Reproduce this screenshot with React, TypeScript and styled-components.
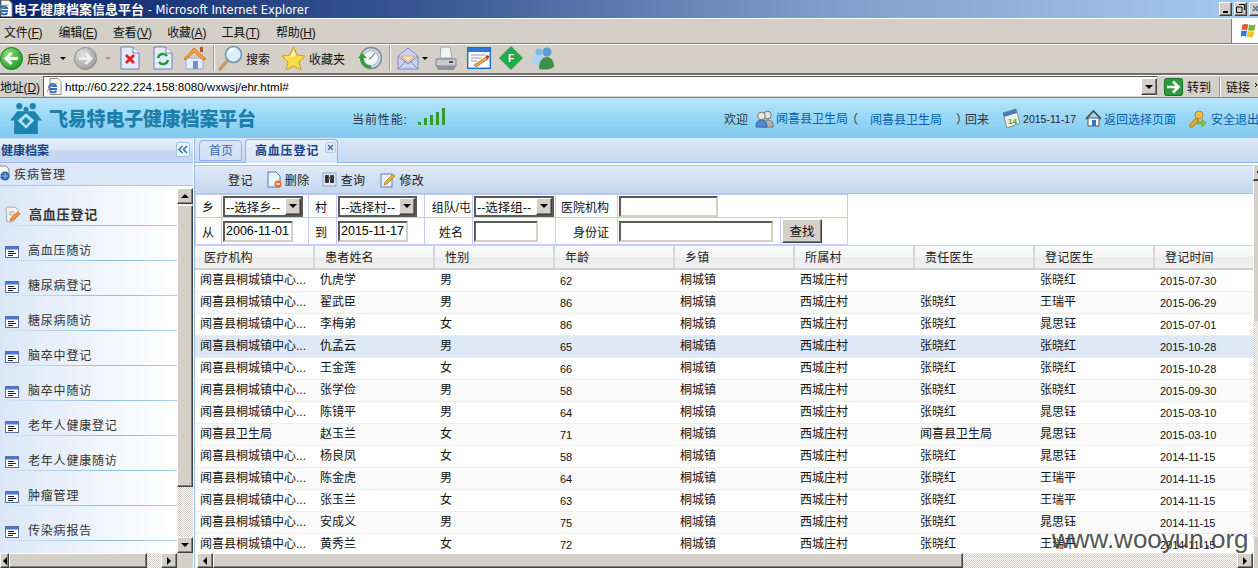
import React from "react";
import styled, { createGlobalStyle, css } from "styled-components";

const UI = `"Liberation Sans", "Noto Sans CJK SC", sans-serif`;
const face = "#d4d0c8";
const dither = `repeating-conic-gradient(#d4d0c8 0 25%, #fff 0 50%) 0 0 / 2px 2px`;
const raised = css`
  background: ${face};
  border: 1px solid;
  border-color: #fff #404040 #404040 #fff;
  box-shadow: inset -1px -1px 0 #808080;
`;
const inset = css`
  background: #fff;
  border: 2px solid;
  border-color: #5a5a5a #d4d0c8 #d4d0c8 #5a5a5a;
`;

const Global = createGlobalStyle`
  html, body { margin: 0; padding: 0; width: 1258px; height: 568px; overflow: hidden; background: #d4d0c8; }
  * { box-sizing: border-box; }
  body { font: 12px ${UI}; color: #000; }
`;

const Page = styled.div`
  position: relative;
  width: 1258px;
  height: 568px;
  overflow: hidden;
  display: flex;
  flex-direction: column;
`;

/* ---------- browser chrome ---------- */
const TitleBar = styled.div`
  height: 18px;
  flex: none;
  display: flex;
  align-items: center;
  padding: 0 0 1px 0;
  background: linear-gradient(90deg, #0a246a 0%, #3a5a96 35%, #7f9dca 65%, #a6caf0 100%);
  color: #fff;
  font-weight: bold;
`;
const TitleIcon = styled.span`
  display: flex;
  flex: none;
  margin-left: -3px;
`;
const TitleText = styled.span`
  margin-left: 1px;
  font-size: 13px;
  white-space: nowrap;
  font-family: "Liberation Sans", "Noto Sans CJK SC", sans-serif;
  & > small { font-size: 11.5px; font-family: "DejaVu Sans", sans-serif; font-weight: normal; }
`;
const WinButtons = styled.div`
  margin-left: auto;
  display: flex;
  gap: 2px;
  margin-right: -4px;
`;
const WinButton = styled.div`
  ${raised};
  width: 13px;
  height: 14px;
  display: flex;
  align-items: center;
  justify-content: center;
`;
const MenuBar = styled.div`
  height: 26px;
  flex: none;
  display: flex;
  align-items: center;
  border-top: 1px solid #fff;
  border-bottom: 1px solid #808080;
  box-shadow: inset 0 1px 0 #d4d0c8;
`;
const MenuItem = styled.span`
  width: 54.4px;
  flex: none;
  padding-left: 4px;
  color: #111;
  white-space: nowrap;
  letter-spacing: -0.2px;
`;
const FlagBox = styled.div`
  margin-left: auto;
  width: 27px;
  height: 24px;
  background: #fff;
  border-left: 1px solid #808080;
  display: flex;
  align-items: center;
  padding-left: 9px;
  overflow: hidden;
`;
const Toolbar = styled.div`
  height: 31px;
  flex: none;
  display: flex;
  align-items: center;
  padding-bottom: 2px;
  border-top: 1px solid #fff;
  border-bottom: 2px solid #707070;
`;
const ToolIcon = styled.span<{ $at: number }>`
  flex: none;
  display: flex;
  margin-left: ${(p) => p.$at}px;
`;
const ToolLabel = styled.span<{ $at: number }>`
  flex: none;
  margin-left: ${(p) => p.$at}px;
  color: #111;
  white-space: nowrap;
`;
const Caret = styled.span<{ $at: number; $dim?: boolean }>`
  flex: none;
  margin-left: ${(p) => p.$at}px;
  width: 0;
  height: 0;
  border: 3px solid transparent;
  border-bottom: 0;
  border-top: 3px solid ${(p) => (p.$dim ? "#9a9a9a" : "#000")};
`;
const ToolSep = styled.span<{ $at: number }>`
  flex: none;
  margin-left: ${(p) => p.$at}px;
  width: 2px;
  height: 26px;
  border-left: 1px solid #999;
  border-right: 1px solid #fff;
`;
const AddressBar = styled.div`
  height: 23px;
  flex: none;
  display: flex;
  align-items: center;
  overflow: hidden;
  border-top: 1px solid #fff;
  border-bottom: 1px solid #808080;
`;
const AddressLabel = styled.span`
  width: 43px;
  flex: none;
  color: #111;
  letter-spacing: -0.2px;
`;
const AddressBox = styled.div`
  width: 1115px;
  height: 21px;
  flex: none;
  display: flex;
  align-items: center;
  background: #fff;
  border: 1px solid;
  border-color: #555 #d4d0c8 #d4d0c8 #555;
  padding-left: 2px;
  position: relative;
`;
const AddressText = styled.span`
  margin-left: 3px;
  font: 11.6px "Liberation Sans", sans-serif;
`;
const ComboArrow = styled.span`
  ${raised};
  width: 16px;
  height: 17px;
  margin-left: auto;
  display: flex;
  align-items: center;
  justify-content: center;
  flex: none;
  &::after {
    content: "";
    border: 4px solid transparent;
    border-bottom: 0;
    border-top: 4px solid #000;
  }
`;
const GoLabel = styled.span`
  margin-left: 4px;
  color: #111;
  flex: none;
  white-space: nowrap;
`;
const AddrSep = styled.span`
  width: 2px;
  height: 20px;
  margin-left: 8px;
  flex: none;
  border-left: 1px solid #999;
  border-right: 1px solid #fff;
`;
const LinksLabel = styled.span`
  margin-left: 5px;
  flex: none;
  color: #111;
  white-space: nowrap;
`;
const LinksMore = styled.span`
  display: flex;
  flex: none;
  margin-left: 5px;
`;

/* ---------- site header ---------- */
const SiteHeader = styled.header`
  height: 40px;
  flex: none;
  display: flex;
  align-items: center;
  overflow: hidden;
  background: linear-gradient(180deg, #b9e6fb 0%, #9ad8f7 45%, #7fcaf0 100%);
  white-space: nowrap;
  color: #333;
  padding-top: 1px;
`;
const LogoText = styled.span`
  margin-left: 6px;
  font-size: 19px;
  line-height: 22px;
  font-weight: 900;
  color: #1d7fab;
  letter-spacing: -0.2px;
  width: 208px;
  flex: none;
  margin-top: -1px;
  font-family: "Noto Sans CJK SC", sans-serif;
`;
const PerfLabel = styled.span`
  margin-left: 95px;
  width: 66px;
  flex: none;
  color: #333;
  letter-spacing: 0.9px;
  margin-top: -1px;
`;
const Bars = styled.span`
  display: flex;
  align-items: flex-end;
  gap: 3px;
  height: 18px;
  width: 27px;
  flex: none;
  margin-top: -6px;
`;
const Bar = styled.i<{ $h: number }>`
  width: 3px;
  height: ${(p) => p.$h}px;
  background: #2f9e2f;
`;
const Muted = styled.span<{ $at: number }>`
  margin-left: ${(p) => p.$at}px;
  color: #333;
  flex: none;
`;
const LinkText = styled.span<{ $at: number; $up?: number }>`
  margin-left: ${(p) => p.$at}px;
  color: #0a5ea8;
  flex: none;
  margin-top: ${(p) => (p.$up ? -p.$up : 0)}px;
`;
const DateText = styled.span`
  margin-left: 2px;
  font-size: 10.5px;
  color: #222;
  flex: none;
`;

/* ---------- body ---------- */
const Body = styled.div`
  flex: 1;
  min-height: 0;
  display: flex;
  background: #fff;
`;
const Side = styled.aside`
  width: 195px;
  flex: none;
  display: flex;
  flex-direction: column;
  border-right: 1px solid #99bbe8;
  padding-right: 1px;
  position: relative;
  background: #fff;
`;
const SideHead = styled.div`
  height: 25px;
  flex: none;
  display: flex;
  align-items: center;
  padding: 0 3px 2px 1px;
  justify-content: space-between;
  background: linear-gradient(180deg, #e6eef9 0%, #d9e5f6 45%, #c3d6ef 55%, #c6d8f0 100%);
  border-top: 1px solid #cfe0f5;
  border-bottom: 1px solid #99bbe8;
  color: #15428b;
  font-weight: bold;
`;
const Collapse = styled.span`
  width: 14px;
  height: 15px;
  background: #eaf2fc;
  border: 1px solid #a8c4e8;
  border-radius: 2px;
  display: flex;
  align-items: center;
  justify-content: center;
`;
const SideGroup = styled.div`
  height: 23px;
  flex: none;
  display: flex;
  align-items: center;
  gap: 3px;
  padding-bottom: 2px;
  background: #dce8f8;
  border-bottom: 1px solid #a8c6e6;
  color: #333;
  letter-spacing: 1px;
  overflow: hidden;
`;
const SideMain = styled.div`
  flex: 1;
  min-height: 0;
  display: flex;
`;
const SideList = styled.div`
  flex: 1;
  min-width: 0;
  background: linear-gradient(90deg, #dbe7f7 0%, #f0f5fc 55%, #fff 100%);
  padding-top: 3px;
  overflow: hidden;
`;
const SideItem = styled.div<{ $active?: boolean }>`
  height: 35px;
  display: flex;
  align-items: flex-end;
  gap: 9px;
  padding: 0 0 2px 5px;
  color: #333;
  font-size: ${(p) => (p.$active ? 13 : 12)}px;
  font-weight: ${(p) => (p.$active ? "bold" : "normal")};
  border-bottom: 1px solid transparent;
  border-image: linear-gradient(90deg, #dbe7f7 0%, #8dbfe0 60%, #a9d2ea 100%) 1;
  letter-spacing: 0.8px;
  &:first-child { height: 37px; }
`;
const VScroll = styled.div`
  width: 16px;
  flex: none;
  display: flex;
  flex-direction: column;
  background: ${dither};
  margin-top: 2px;
`;
const SBtn = styled.div`
  ${raised};
  width: 16px;
  height: 16px;
  flex: none;
  display: flex;
  align-items: center;
  justify-content: center;
`;
const VThumb = styled.div<{ $h: number }>`
  ${raised};
  height: ${(p) => p.$h}px;
  flex: none;
  margin-top: 1px;
`;
const VSpacer = styled.div`
  flex: 1;
`;
const HScroll = styled.div`
  height: 15px;
  flex: none;
  display: flex;
  background: ${dither};
`;
const HThumb = styled.div<{ $w: number }>`
  ${raised};
  width: ${(p) => p.$w}px;
  height: 15px;
  flex: none;
`;
const ScrollCorner = styled.div`
  width: 16px;
  flex: none;
  background: ${face};
`;
const ClippedBtn = styled(SBtn)`
  width: 9px;
  height: 15px;
`;
const HBtn = styled(SBtn)`
  height: 15px;
`;

const Main = styled.main`
  flex: 1;
  min-width: 0;
  display: flex;
  flex-direction: column;
`;
const TabStrip = styled.div`
  height: 25px;
  flex: none;
  display: flex;
  align-items: flex-start;
  gap: 3px;
  padding-left: 4px;
  background: linear-gradient(180deg, #dde8f8 0%, #c6d9f1 100%);
  border-bottom: 1px solid #8db2e3;
`;
const Tab = styled.div<{ $active?: boolean }>`
  height: ${(p) => (p.$active ? 24 : 21)}px;
  width: ${(p) => (p.$active ? 93 : 43)}px;
  margin-top: ${(p) => (p.$active ? 1 : 2)}px;
  display: flex;
  align-items: center;
  padding-left: 9px;
  padding-bottom: ${(p) => (p.$active ? 4 : 2)}px;
  gap: 6px;
  border: 1px solid #8db2e3;
  border-bottom: ${(p) => (p.$active ? "0" : "1px solid #8db2e3")};
  border-radius: 4px 4px 0 0;
  background: ${(p) => (p.$active ? "linear-gradient(180deg,#e9f1fb,#dbe7f7)" : "linear-gradient(180deg,#dbe7f7,#cfdff4)")};
  color: ${(p) => (p.$active ? "#15428b" : "#416aa3")};
  font-weight: ${(p) => (p.$active ? "bold" : "normal")};
  letter-spacing: ${(p) => (p.$active ? 0.8 : 0)}px;
  position: relative;
`;
const TabClose = styled.span`
  width: 11px;
  height: 11px;
  margin-top: -4px;
  border-radius: 2px;
  background: #dfe9f7;
  border: 1px solid #b5cbe8;
  display: flex;
  align-items: center;
  justify-content: center;
`;
const MainScrollArea = styled.div`
  flex: 1;
  min-height: 0;
  display: flex;
  padding-top: 2px;
`;
const MainColumn = styled.div`
  flex: 1;
  min-width: 0;
  display: flex;
  flex-direction: column;
  overflow: hidden;
`;
const RightScroll = styled.div`
  width: 5px;
  flex: none;
  overflow: hidden;
  display: flex;
  flex-direction: column;
  background: ${dither};
`;
const RightCap = styled.div`
  height: 16px;
  flex: none;
  background: ${face};
  border-left: 1px solid #fff;
  border-bottom: 2px solid #404040;
  display: flex;
  align-items: center;
  padding-left: 3px;
  &::after { content: ""; width: 2px; height: 2px; background: #000; }
`;
const RightThumb = styled.div`
  height: 140px;
  flex: none;
  background: ${face};
  border-left: 1px solid #fff;
`;
const RightEnd = styled.div`
  height: 31px;
  flex: none;
  margin-top: auto;
  background: ${face};
  border-left: 1px solid #fff;
`;
const ActionBar = styled.div`
  height: 29px;
  flex: none;
  display: flex;
  align-items: center;
  background: linear-gradient(180deg, #dfe9f7 0%, #c4d8f0 100%);
  border-top: 1px solid #a9c8ee;
  border-bottom: 1px solid #a9c3e4;
  color: #222;
  letter-spacing: 0.4px;
`;
const ActionIcon = styled.span<{ $at: number }>`
  margin-left: ${(p) => p.$at}px;
  display: flex;
  flex: none;
`;
const ActionText = styled.span<{ $at: number }>`
  margin-left: ${(p) => p.$at}px;
  flex: none;
`;

const FormWrap = styled.div`
  height: 51px;
  flex: none;
  background: #fff;
`;
const FormTable = styled.table`
  border-collapse: collapse;
  table-layout: fixed;
  width: 652px;
  height: 51px;
  & td {
    border: 1px solid #c8c8fa;
    padding: 0 0 0 1px;
    vertical-align: middle;
    white-space: nowrap;
    color: #111;
  }
`;
const LabelCell = styled.td<{ $right?: boolean }>`
  && { text-align: ${(p) => (p.$right ? "right" : "left")}; padding: ${(p) => (p.$right ? "0 1px 0 0" : "0 0 0 6px")}; }
`;
const PaddedLabel = styled(LabelCell)<{ $pad: number }>`
  && { padding-right: ${(p) => p.$pad}px; }
`;
const Input = styled.input<{ $w: number }>`
  ${inset};
  display: block;
  width: ${(p) => p.$w}px;
  height: 21px;
  padding: 0 1px;
  font: 12.5px "Liberation Sans", sans-serif;
  color: #000;
`;
const Select = styled.div<{ $w: number }>`
  width: ${(p) => p.$w}px;
  height: 21px;
  display: flex;
  align-items: center;
  background: #fff;
  border: 2px solid #5a5a5a;
  padding-left: 1px;
  overflow: hidden;
  font-size: 12.5px;
  white-space: nowrap;
`;
const SelectText = styled.span`
  flex: 1;
  min-width: 0;
  overflow: hidden;
`;
const SelectArrow = styled.span`
  ${raised};
  width: 16px;
  height: 17px;
  flex: none;
  display: flex;
  align-items: center;
  justify-content: center;
  &::after {
    content: "";
    border: 4px solid transparent;
    border-bottom: 0;
    border-top: 4px solid #000;
  }
`;
const FindButton = styled.button`
  ${raised};
  display: block;
  width: 40px;
  height: 24px;
  padding: 0 0 2px;
  font: 12.5px ${UI};
  color: #111;
`;

const Grid = styled.div`
  flex: 1;
  min-height: 0;
  overflow: hidden;
  background: #fff;
  border-top: 1px solid #c5d5e8;
`;
const columns = css`
  display: grid;
  grid-template-columns: repeat(9, 120px);
  width: 1080px;
`;
const GridHead = styled.div`
  ${columns};
  height: 24px;
  background: linear-gradient(180deg, #fafafa 0%, #f5f5f5 50%, #ececee 52%, #f0f0f0 100%);
  border-bottom: 2px solid #d0d0d0;
`;
const HeadCell = styled.div`
  padding: 2px 0 0 10px;
  border-right: 2px solid #d8d8d8;
  color: #222;
  letter-spacing: 0.2px;
  white-space: nowrap;
  &:first-child { padding-left: 9px; }
  &:last-child { border-right: 0; }
`;
const Row = styled.div<{ $alt?: boolean; $selected?: boolean }>`
  ${columns};
  height: 22px;
  background: ${(p) => (p.$selected ? "#dfe8f6" : p.$alt ? "#fafafa" : "#fff")};
  border-bottom: 1px solid #ededed;
`;
const Cell = styled.div<{ $num?: boolean }>`
  padding: ${(p) => (p.$num ? "4px" : "3px")} 0 0 5px;
  font-size: ${(p) => (p.$num ? "11px" : "12px")};
  line-height: 15px;
  color: #111;
  white-space: nowrap;
  overflow: hidden;
`;
const BottomBar = styled.div`
  height: 15px;
  flex: none;
  display: flex;
  background: ${dither};
`;
const BottomGap = styled.div`
  width: 2px;
  flex: none;
  background: #fff;
`;
const Watermark = styled.div`
  position: absolute;
  left: 1052px;
  top: 524px;
  font: 26px "Liberation Sans", sans-serif;
  color: #444;
  opacity: 0.9;
  white-space: nowrap;
  pointer-events: none;
`;

/* ---------- icons ---------- */
const Tri = ({ d }: { d: "u" | "d" | "l" | "r" }) => {
  const p = { u: "0,7 4,3 8,7", d: "0,3 4,7 8,3", l: "6,1 2,5 6,9", r: "2,1 6,5 2,9" }[d];
  return <svg width="8" height="10"><polygon points={p} fill="#000" /></svg>;
};
const IeDoc = () => (
  <svg width="16" height="17" viewBox="0 0 16 17">
    <path d="M4 .5h8l3 3v13H4z" fill="#fff" stroke="#8a8a8a" />
    <path d="M11 11H3.500a3.500 3.500 0 0 1 6.500-3H4M10.500 13a4.500 4.500 0 0 1-6.500 0" fill="none" stroke="#2c6cd0" strokeWidth="2" />
    <path d="M.8 15c1.500-5 7-10 11-10" fill="none" stroke="#e9a020" strokeWidth="1" />
  </svg>
);
const CircleBtn = ({ on }: { on: boolean }) => (
  <svg width="23" height="23" viewBox="0 0 23 23">
    <defs>
      <radialGradient id={on ? "cg" : "cd"} cx="35%" cy="30%" r="75%">
        <stop offset="0" stopColor={on ? "#8fe07a" : "#e0e0e0"} />
        <stop offset="1" stopColor={on ? "#1f9a25" : "#9c9c9c"} />
      </radialGradient>
    </defs>
    <circle cx="11.5" cy="11.5" r="11" fill={`url(#${on ? "cg" : "cd"})`} stroke={on ? "#1d7a20" : "#8c8c8c"} />
    {on ? (
      <path d="M18 11.5H7M11.5 6l-5.5 5.5 5.5 5.5" fill="none" stroke="#fff" strokeWidth="3" />
    ) : (
      <path d="M5 11.5h11M11.5 6l5.5 5.5-5.5 5.5" fill="none" stroke="#eee" strokeWidth="3" />
    )}
  </svg>
);
const DocBase = ({ children }: { children: React.ReactNode }) => (
  <svg width="20" height="24" viewBox="0 0 20 24">
    <path d="M1 1h12l6 6v16H1z" fill="#e4ecfb" stroke="#6f7fb8" />
    <path d="M13 1v6h6" fill="#fff" stroke="#6f7fb8" />
    {children}
  </svg>
);
const HomeIcon = () => (
  <svg width="24" height="25" viewBox="0 0 24 25">
    <path d="M3 12v11h17V12z" fill="#e8eef8" stroke="#9aa8c8" />
    <rect x="10" y="15" width="5" height="8" fill="#6d8fd0" />
    <path d="M1 13 11 2l12 11-3 1-9-8-8 8z" fill="#f2a23c" stroke="#d07a20" />
    <rect x="17" y="1" width="3" height="5" fill="#c84a30" />
  </svg>
);
const SearchIcon = () => (
  <svg width="25" height="26" viewBox="0 0 25 26">
    <path d="M10 15 2 24" stroke="#c89a6a" strokeWidth="3.4" strokeLinecap="round" />
    <circle cx="15.5" cy="9.5" r="8" fill="#d8f0fb" stroke="#6f94b8" strokeWidth="1.6" />
    <path d="M11 8a5 5 0 0 1 5-4" fill="none" stroke="#fff" strokeWidth="2" />
  </svg>
);
const StarIcon = () => (
  <svg width="25" height="25" viewBox="0 0 25 25">
    <polygon points="12.5,1 16,9 24,10 18,16 20,24 12.5,20 5,24 7,16 1,10 9,9" fill="#fbdc4a" stroke="#c8a020" />
    <polygon points="12.5,4 14.5,10 9,11" fill="#fff7b8" />
  </svg>
);
const HistoryIcon = () => (
  <svg width="24" height="24" viewBox="0 0 24 24">
    <circle cx="13" cy="12" r="10.5" fill="#cfd8df" stroke="#7b8a96" strokeWidth="1.5" />
    <circle cx="13" cy="12" r="7.5" fill="#f4f7fa" stroke="#a8b4c0" />
    <path d="M13 12l4-5M13 12l-2 1" stroke="#555" />
    <path d="M4 11c-1 5 3 10 9 10" fill="none" stroke="#2f9e2f" strokeWidth="3" />
    <path d="M0 12 4 7l5 5z" fill="#2f9e2f" />
  </svg>
);
const MailIcon = () => (
  <svg width="22" height="25" viewBox="0 0 22 25">
    <path d="M1 10 11 2l10 8v13H1z" fill="#c8d2f0" stroke="#8088c8" />
    <path d="M4 10h14l-7 6z" fill="#fbe2b8" stroke="#e0b070" />
    <path d="M1 23l8-8M21 23l-8-8M1 10l10 8 10-8" fill="none" stroke="#8088c8" />
  </svg>
);
const PrintIcon = () => (
  <svg width="24" height="25" viewBox="0 0 24 25">
    <path d="M7 1h9l2 11H6z" fill="#f4f4f4" stroke="#9aa4b0" />
    <path d="M2 13h20v7H2z" fill="#c8ccd0" stroke="#7d8288" />
    <path d="M2 20h20l-2 4H4z" fill="#8e9398" />
    <rect x="15" y="15" width="4" height="2" fill="#4a4f54" />
  </svg>
);
const EditIcon = () => (
  <svg width="24" height="22" viewBox="0 0 24 22">
    <rect x=".7" y=".7" width="22.6" height="20.6" fill="#fff" stroke="#1a6cd0" strokeWidth="1.4" />
    <rect x="1" y="1" width="22" height="4" fill="#2a78d8" />
    <path d="M4 8h15M4 11h11M4 14h6" stroke="#8a9ab8" />
    <path d="M7 18 19 10l2 2-12 8z" fill="#e8b040" stroke="#805020" strokeWidth=".6" />
    <circle cx="20.5" cy="10" r="1.8" fill="#d03030" />
  </svg>
);
const DiamondF = () => (
  <svg width="24" height="24" viewBox="0 0 24 24">
    <polygon points="12,0 24,12 12,24 0,12" fill="#27a84a" />
    <text x="12" y="16" textAnchor="middle" fontSize="10" fontWeight="bold" fontFamily="Liberation Sans" fill="#fff">F</text>
  </svg>
);
const MsnIcon = () => (
  <svg width="24" height="24" viewBox="0 0 24 24">
    <circle cx="8" cy="6" r="3.5" fill="#7ab8e8" />
    <path d="M0 17c1-6 4-8 8-8s5 3 5 6l-7 5z" fill="#a8d4f2" />
    <circle cx="16" cy="6" r="4.5" fill="#5a9ed8" />
    <path d="M8 23c0-9 4-12 8-12s7 4 7 10c-5 3-10 3-15 2z" fill="#3f8f46" />
  </svg>
);
const Flag = () => (
  <svg width="21" height="20" viewBox="0 0 21 20">
    <path d="M2 2c3-1 5-1 7 0l-1.500 7c-2-1-4-1-7 0z" fill="#e8562a" />
    <path d="M10 2c3 1 5 1 8 0l-1.500 7c-3 1-5 1-8 0z" fill="#7ab82c" />
    <path d="M.5 10c3-1 5-1 7 0L6 17c-2-1-4-1-7 0z" fill="#2c7ae0" />
    <path d="M8.500 10c3 1 5 1 8 0L15 17c-3 1-5 1-8 0z" fill="#f8c020" />
  </svg>
);
const GoIcon = () => (
  <svg width="19" height="18" viewBox="0 0 19 18">
    <rect x=".5" y=".5" width="18" height="17" rx="2" fill="#2d9a3c" stroke="#17702a" />
    <path d="M3 9h10M9 3.500 14.500 9 9 14.500" fill="none" stroke="#fff" strokeWidth="2.600" />
  </svg>
);
const Logo = () => (
  <svg width="34" height="33" viewBox="0 0 33 32">
    <circle cx="10" cy="4" r="3" fill="#1d84ad" />
    <circle cx="23" cy="4" r="3" fill="#1d84ad" />
    <circle cx="16.500" cy="7" r="2.400" fill="#1d84ad" />
    <path d="M1 18 8 9h17l7 9h-4v13H5V18z" fill="#1d84ad" />
    <path d="M16.500 11l8 7-8 8-8-8z" fill="#b6e4f8" />
    <path d="M15 15h3v2h2v3h-2v2h-3v-2h-2v-3h2z" fill="#1d84ad" />
  </svg>
);
const UserIcon = () => (
  <svg width="19" height="18" viewBox="0 0 19 18">
    <circle cx="12.500" cy="5" r="3.800" fill="#e8e4d8" stroke="#77706a" />
    <path d="M7 17c0-5 2-7 6-7s5 3 5 7z" fill="#b8b4ac" stroke="#77706a" />
    <circle cx="6.500" cy="6" r="3.800" fill="#f6e8c8" stroke="#6a788a" />
    <path d="M1 17c0-5 2-7 5.500-7s5.500 3 5.500 7z" fill="#4f8ad0" stroke="#345f98" />
  </svg>
);
const CalIcon = () => (
  <svg width="19" height="21" viewBox="0 0 19 21">
    <path d="M1 5l13-4 4 14-13 5z" fill="#f2f2ea" stroke="#8a8a80" />
    <path d="M1 5l13-4 1 4-13 4z" fill="#4a7cc0" />
    <text x="6" y="16" fontSize="8" fontWeight="bold" fontFamily="Liberation Sans" fill="#4a9a30">14</text>
  </svg>
);
const SmallHome = () => (
  <svg width="17" height="17" viewBox="0 0 17 17">
    <path d="M3 8v8h11V8z" fill="#fff" stroke="#555" />
    <rect x="7" y="10" width="4" height="6" fill="#3a72c8" />
    <path d="M1 9l7.500-8L16 9" fill="none" stroke="#444" strokeWidth="1.600" />
  </svg>
);
const KeyIcon = () => (
  <svg width="18" height="18" viewBox="0 0 18 18">
    <circle cx="11" cy="5" r="4" fill="#eec04a" stroke="#b08420" />
    <path d="M8 8 2 14v3h3l6-6z" fill="#e0aa30" stroke="#b08420" />
    <path d="M9 12h5V9l4 4-4 4v-3H9z" fill="#8cc040" stroke="#6a9828" strokeWidth=".6" />
  </svg>
);
const ListIcon = () => (
  <svg width="14" height="12" viewBox="0 0 14 12">
    <rect x=".5" y=".5" width="13" height="11" fill="#fff" stroke="#5670a8" />
    <rect x="1" y="1" width="12" height="2.500" fill="#4a78d8" />
    <path d="M3 5.500h6M3 7.500h8M3 9.500h5" stroke="#222" />
  </svg>
);
const ActiveIcon = () => (
  <svg width="15" height="17" viewBox="0 0 15 17">
    <path d="M1 3c0-2 3-2 6-2s6 1 6 4v4l-5 7H2z" fill="#f2f0ea" stroke="#b0aca0" />
    <path d="M5 6h3c2 0 2 3 0 3H5V5" fill="none" stroke="#b0aca0" />
    <path d="M5 15l1-3 7-6 2 2-7 6z" fill="#f0a020" stroke="#c83020" strokeWidth=".6" />
  </svg>
);
const GroupIcon = () => (
  <svg width="14" height="16" viewBox="0 0 14 16" style={{ marginLeft: -3 }}>
    <path d="M1 1h8l3 3v9H1z" fill="#f6f6f6" stroke="#888" />
    <circle cx="8" cy="11" r="4.500" fill="#2c6cb8" />
    <path d="M5 11h6M8 8v6" stroke="#8cc0ea" />
  </svg>
);
const DelIcon = () => (
  <svg width="15" height="17" viewBox="0 0 15 17">
    <path d="M1 1h8l4 4v11H1z" fill="#eaf2fc" stroke="#4a7cc0" />
    <circle cx="11" cy="13" r="3.500" fill="#e8702a" />
    <path d="M9 13h4" stroke="#fff" strokeWidth="1.400" />
  </svg>
);
const FindIcon = () => (
  <svg width="15" height="15" viewBox="0 0 15 15">
    <rect x="1" y="1" width="13" height="13" fill="#dfeaf6" stroke="#8aa4c4" />
    <rect x="3" y="3" width="4" height="8" rx="1" fill="#333" />
    <rect x="8" y="3" width="4" height="8" rx="1" fill="#333" />
    <rect x="6" y="5" width="3" height="2" fill="#666" />
  </svg>
);
const PenIcon = () => (
  <svg width="16" height="16" viewBox="0 0 16 16">
    <rect x="1" y="2" width="11" height="13" fill="#e8f0fa" stroke="#5a80b8" />
    <path d="M4 13l1-3 8-8 2 2-8 8z" fill="#f0b030" stroke="#b07820" strokeWidth=".7" />
  </svg>
);
const Chevrons = () => (
  <svg width="10" height="9" viewBox="0 0 10 9">
    <path d="M4.500 1 1 4.500 4.500 8M9 1 5.500 4.500 9 8" fill="none" stroke="#3a6ea8" strokeWidth="1.500" />
  </svg>
);
const XMark = () => (
  <svg width="7" height="7" viewBox="0 0 7 7">
    <path d="M1 1l5 5M6 1 1 6" stroke="#4a6a98" strokeWidth="1.400" />
  </svg>
);
const MoreChevrons = () => (
  <svg width="5" height="7" viewBox="0 0 5 7">
    <path d="M0 0l2 2-2 2M3 0l2 2-2 2" fill="none" stroke="#000" />
  </svg>
);

/* ---------- data ---------- */
const C = "闻喜县桐城镇中心...";
const rows: [string, string, string, string, string, string, string][] = [
  [C, "仇虎学", "男", "62", "", "张晓红", "2015-07-30"],
  [C, "翟武臣", "男", "86", "张晓红", "王瑞平", "2015-06-29"],
  [C, "李梅弟", "女", "86", "张晓红", "晁思钰", "2015-07-01"],
  [C, "仇孟云", "男", "65", "张晓红", "张晓红", "2015-10-28"],
  [C, "王金莲", "女", "66", "张晓红", "张晓红", "2015-10-28"],
  [C, "张学俭", "男", "58", "张晓红", "张晓红", "2015-09-30"],
  [C, "陈镜平", "男", "64", "张晓红", "晁思钰", "2015-03-10"],
  ["闻喜县卫生局", "赵玉兰", "女", "71", "闻喜县卫生局", "晁思钰", "2015-03-10"],
  [C, "杨良凤", "女", "58", "张晓红", "晁思钰", "2014-11-15"],
  [C, "陈金虎", "男", "64", "张晓红", "王瑞平", "2014-11-15"],
  [C, "张玉兰", "女", "63", "张晓红", "王瑞平", "2014-11-15"],
  [C, "安成义", "男", "75", "张晓红", "晁思钰", "2014-11-15"],
  [C, "黄秀兰", "女", "72", "张晓红", "王瑞平", "2014-11-15"],
];
const heads = ["医疗机构", "患者姓名", "性别", "年龄", "乡镇", "所属村", "责任医生", "登记医生", "登记时间"];
const menus: [string, string][] = [["文件", "F"], ["编辑", "E"], ["查看", "V"], ["收藏", "A"], ["工具", "T"], ["帮助", "H"]];
const sideItems = ["高血压随访", "糖尿病登记", "糖尿病随访", "脑卒中登记", "脑卒中随访", "老年人健康登记", "老年人健康随访", "肿瘤管理", "传染病报告"];

export default function App() {
  return (
    <Page>
      <Global />
      <TitleBar>
        <TitleIcon><IeDoc /></TitleIcon>
        <TitleText>电子健康档案信息平台 <small>- Microsoft Internet Explorer</small></TitleText>
        <WinButtons>
          <WinButton><svg width="8" height="8"><rect x="1" y="6" width="5" height="2" /></svg></WinButton>
          <WinButton><svg width="9" height="9"><path d="M3 .5h5.500V6M.5 3H6v5.500H.5z" fill="none" stroke="#000" /></svg></WinButton>
          <WinButton><XMark /></WinButton>
        </WinButtons>
      </TitleBar>
      <MenuBar>
        {menus.map(([n, k]) => (
          <MenuItem key={k}>{n}(<u>{k}</u>)</MenuItem>
        ))}
        <FlagBox><Flag /></FlagBox>
      </MenuBar>
      <Toolbar>
        <ToolIcon $at={0}><CircleBtn on /></ToolIcon>
        <ToolLabel $at={4}>后退</ToolLabel>
        <Caret $at={9} />
        <ToolIcon $at={8}><CircleBtn on={false} /></ToolIcon>
        <Caret $at={8} $dim />
        <ToolIcon $at={9}>
          <DocBase><path d="M6 9l8 8M14 9l-8 8" stroke="#e02020" strokeWidth="2.800" /></DocBase>
        </ToolIcon>
        <ToolIcon $at={13}>
          <DocBase>
            <path d="M5 12a5 5 0 0 1 9-2" fill="none" stroke="#1d9a35" strokeWidth="2.400" />
            <path d="M15 14a5 5 0 0 1-9 2" fill="none" stroke="#1d9a35" strokeWidth="2.400" />
          </DocBase>
        </ToolIcon>
        <ToolIcon $at={10}><HomeIcon /></ToolIcon>
        <ToolSep $at={6} />
        <ToolIcon $at={3}><SearchIcon /></ToolIcon>
        <ToolLabel $at={3}>搜索</ToolLabel>
        <ToolIcon $at={11}><StarIcon /></ToolIcon>
        <ToolLabel $at={3}>收藏夹</ToolLabel>
        <ToolIcon $at={13}><HistoryIcon /></ToolIcon>
        <ToolSep $at={7} />
        <ToolIcon $at={6}><MailIcon /></ToolIcon>
        <Caret $at={3} />
        <ToolIcon $at={6}><PrintIcon /></ToolIcon>
        <ToolIcon $at={9}><EditIcon /></ToolIcon>
        <ToolIcon $at={8}><DiamondF /></ToolIcon>
        <ToolIcon $at={8}><MsnIcon /></ToolIcon>
      </Toolbar>
      <AddressBar>
        <AddressLabel>地址(<u>D</u>)</AddressLabel>
        <AddressBox>
          <IeDoc />
          <AddressText>http://60.222.224.158:8080/wxwsj/ehr.html#</AddressText>
          <ComboArrow />
        </AddressBox>
        <ToolIcon $at={6}><GoIcon /></ToolIcon>
        <GoLabel>转到</GoLabel>
        <AddrSep />
        <LinksLabel>链接</LinksLabel>
        <LinksMore><MoreChevrons /></LinksMore>
      </AddressBar>
      <SiteHeader>
        <ToolIcon $at={9}><Logo /></ToolIcon>
        <LogoText>飞易特电子健康档案平台</LogoText>
        <PerfLabel>当前性能:</PerfLabel>
        <Bars>
          <Bar $h={3} /><Bar $h={7} /><Bar $h={10} /><Bar $h={13} /><Bar $h={17} />
        </Bars>
        <Muted $at={279}>欢迎</Muted>
        <ToolIcon $at={7}><UserIcon /></ToolIcon>
        <LinkText $at={2} $up={3}>闻喜县卫生局</LinkText>
        <Muted $at={-2}>（</Muted>
        <LinkText $at={12}>闻喜县卫生局</LinkText>
        <Muted $at={14}>）</Muted>
        <Muted $at={-3}>回来</Muted>
        <ToolIcon $at={13}><CalIcon /></ToolIcon>
        <DateText>2015-11-17</DateText>
        <ToolIcon $at={9}><SmallHome /></ToolIcon>
        <LinkText $at={2}>返回选择页面</LinkText>
        <ToolIcon $at={12}><KeyIcon /></ToolIcon>
        <LinkText $at={5}>安全退出</LinkText>
      </SiteHeader>
      <Body>
        <Side>
          <SideHead>健康档案<Collapse><Chevrons /></Collapse></SideHead>
          <SideGroup><GroupIcon />疾病管理</SideGroup>
          <SideMain>
            <SideList>
              <SideItem $active><ActiveIcon />高血压登记</SideItem>
              {sideItems.map((s) => (
                <SideItem key={s}><ListIcon />{s}</SideItem>
              ))}
            </SideList>
            <VScroll>
              <SBtn><Tri d="u" /></SBtn>
              <VThumb $h={282} />
              <VSpacer />
              <SBtn><Tri d="d" /></SBtn>
            </VScroll>
          </SideMain>
          <HScroll>
            <ClippedBtn><Tri d="l" /></ClippedBtn>
            <HThumb $w={138} />
            <VSpacer />
            <HBtn><Tri d="r" /></HBtn>
            <ScrollCorner />
          </HScroll>
        </Side>
        <Main>
          <TabStrip>
            <Tab>首页</Tab>
            <Tab $active>高血压登记<TabClose><XMark /></TabClose></Tab>
          </TabStrip>
          <MainScrollArea>
            <MainColumn>
              <ActionBar>
                <ActionText $at={33}>登记</ActionText>
                <ActionIcon $at={14}><DelIcon /></ActionIcon>
                <ActionText $at={3}>删除</ActionText>
                <ActionIcon $at={12}><FindIcon /></ActionIcon>
                <ActionText $at={4}>查询</ActionText>
                <ActionIcon $at={15}><PenIcon /></ActionIcon>
                <ActionText $at={3}>修改</ActionText>
              </ActionBar>
              <FormWrap>
                <FormTable>
                  <colgroup>
                    {[26, 87, 28, 88, 48, 83, 62, 163, 67].map((w, i) => <col key={i} width={w} />)}
                  </colgroup>
                  <tbody>
                    <tr>
                      <LabelCell>乡</LabelCell>
                      <td><Select $w={80}><SelectText>--选择乡--</SelectText><SelectArrow /></Select></td>
                      <LabelCell>村</LabelCell>
                      <td><Select $w={79}><SelectText>--选择村--</SelectText><SelectArrow /></Select></td>
                      <LabelCell $right>组队/屯</LabelCell>
                      <td><Select $w={80}><SelectText>--选择组--</SelectText><SelectArrow /></Select></td>
                      <PaddedLabel $right $pad={8}>医院机构</PaddedLabel>
                      <td colSpan={2}><Input $w={99} /></td>
                    </tr>
                    <tr>
                      <LabelCell>从</LabelCell>
                      <td><Input $w={70} defaultValue="2006-11-01" /></td>
                      <LabelCell>到</LabelCell>
                      <td><Input $w={70} defaultValue="2015-11-17" /></td>
                      <PaddedLabel $right $pad={9}>姓名</PaddedLabel>
                      <td><Input $w={64} /></td>
                      <PaddedLabel $right $pad={8}>身份证</PaddedLabel>
                      <td><Input $w={154} /></td>
                      <td><FindButton>查找</FindButton></td>
                    </tr>
                  </tbody>
                </FormTable>
              </FormWrap>
              <Grid>
                <GridHead>
                  {heads.map((h) => <HeadCell key={h}>{h}</HeadCell>)}
                </GridHead>
                {rows.map((r, i) => (
                  <Row key={i} $alt={i % 2 === 1} $selected={i === 3}>
                    <Cell>{r[0]}</Cell>
                    <Cell>{r[1]}</Cell>
                    <Cell>{r[2]}</Cell>
                    <Cell $num>{r[3]}</Cell>
                    <Cell>桐城镇</Cell>
                    <Cell>西城庄村</Cell>
                    <Cell>{r[4]}</Cell>
                    <Cell>{r[5]}</Cell>
                    <Cell $num>{r[6]}</Cell>
                  </Row>
                ))}
              </Grid>
              <BottomBar>
                <BottomGap />
                <HBtn><Tri d="l" /></HBtn>
                <HThumb $w={750} />
                <VSpacer />
                <HBtn><Tri d="r" /></HBtn>
              </BottomBar>
            </MainColumn>
            <RightScroll>
              <RightCap />
              <RightThumb />
              <RightEnd />
            </RightScroll>
          </MainScrollArea>
        </Main>
      </Body>
      <Watermark>www.wooyun.org</Watermark>
    </Page>
  );
}
